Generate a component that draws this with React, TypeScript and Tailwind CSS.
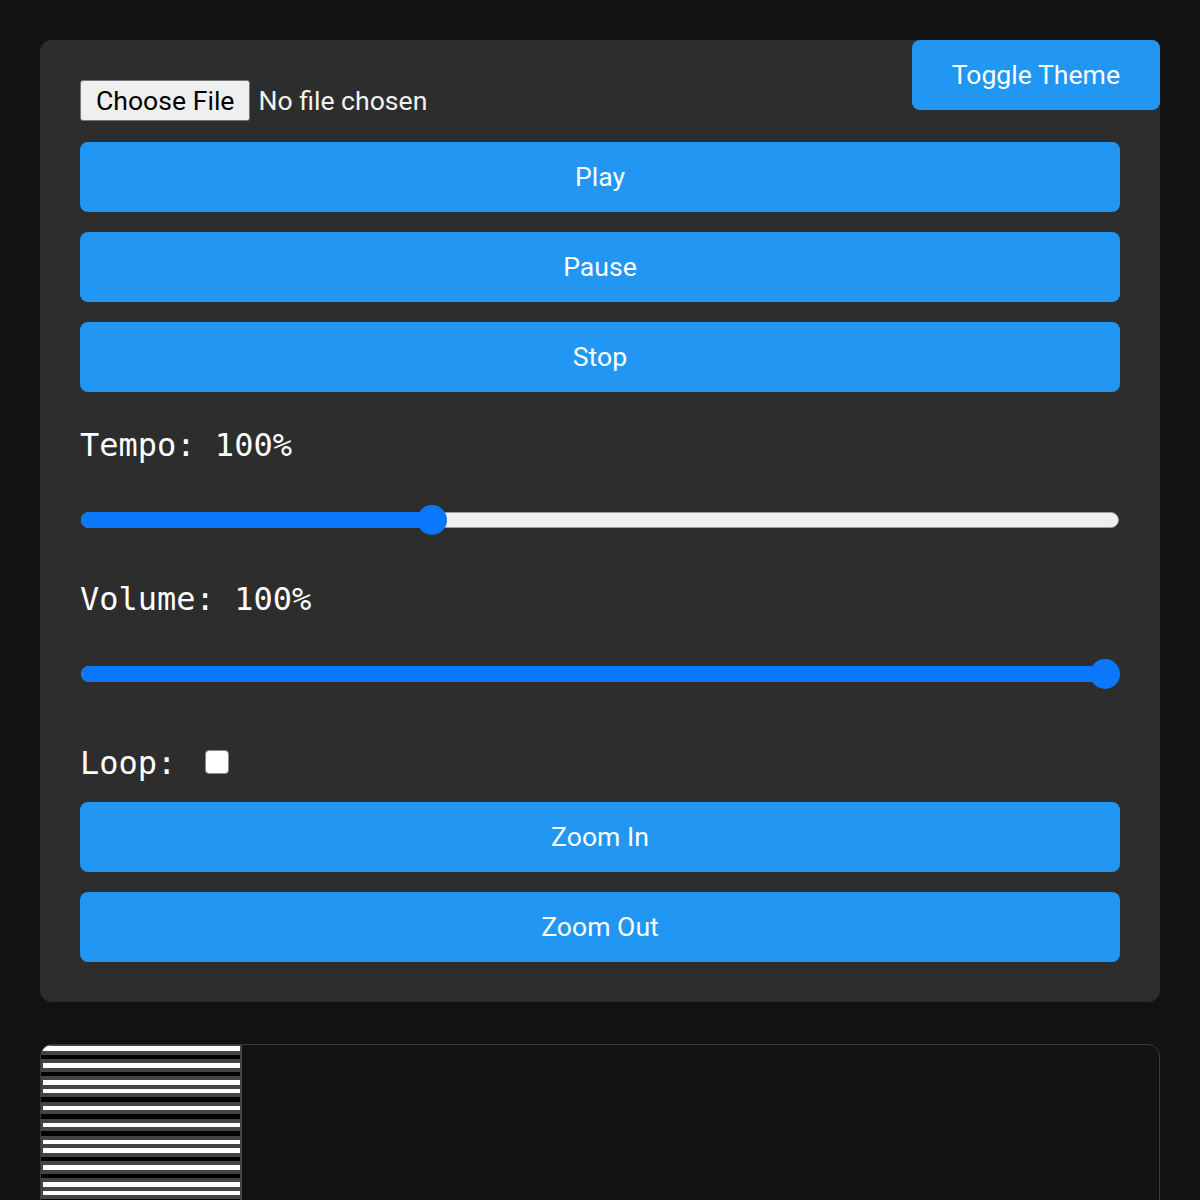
import { useState } from 'react';

const BLACK = [1, 3, 6, 8, 10];

// piano roll keys, top note first (starts on an E)
const keys = Array.from({ length: 72 }, (_, i) => {
  const note = (76 - i + 120) % 12;
  return BLACK.includes(note);
});

function Slider({ pct }: { pct: number }) {
  return (
    <div className="relative h-[30px] w-full">
      <div className="absolute inset-x-[1px] top-[7px] h-[16px] rounded-full border border-[#9c9c9c] bg-[#efefef]" />
      <div
        className="absolute left-[1px] top-[7px] h-[16px] rounded-full bg-[#0b78fb]"
        style={{ width: `calc(${pct} * (100% - 30px) + 15px)` }}
      />
      <div
        className="absolute top-0 h-[30px] w-[30px] rounded-full bg-[#0b78fb]"
        style={{ left: `calc(${pct} * (100% - 30px))` }}
      />
    </div>
  );
}

function Btn({ label }: { label: string }) {
  return (
    <button className="h-[70px] w-full rounded-[8px] bg-[#2196f3] text-[26.6px] text-white">
      {label}
    </button>
  );
}

export default function App() {
  const [loop, setLoop] = useState(false);

  return (
    <div className="min-h-screen bg-[#121212] p-[40px] font-['Roboto',sans-serif]">
      {/* Controls */}
      <div className="relative rounded-[12px] bg-[#2d2d2d] p-[40px]">
        <button className="absolute right-0 top-0 h-[70px] rounded-[8px] bg-[#2196f3] px-[40px] text-[26.6px] text-white">
          Toggle Theme
        </button>

        <input
          type="file"
          className="block h-[41px] text-[26.6px] text-[#f2f2f2] file:mr-[8px] file:h-[41px] file:rounded-[3px] file:border file:border-[#767676] file:bg-[#efefef] file:px-[15px] file:text-[26.6px] file:text-black"
        />

        <div className="mt-[21px] flex flex-col gap-[20px]">
          <Btn label="Play" />
          <Btn label="Pause" />
          <Btn label="Stop" />
        </div>

        <div className="mt-[35px] font-['DejaVu_Sans_Mono',monospace] text-[32px] leading-[37px] text-white">
          Tempo: 100%
        </div>
        <div className="mt-[41px]">
          <Slider pct={1 / 3} />
        </div>

        <div className="mt-[46px] font-['DejaVu_Sans_Mono',monospace] text-[32px] leading-[37px] text-white">
          Volume: 100%
        </div>
        <div className="mt-[41px]">
          <Slider pct={1} />
        </div>

        <label className="mt-[56px] flex items-center font-['DejaVu_Sans_Mono',monospace] text-[32px] leading-[37px] text-white">
          Loop:
          <input
            type="checkbox"
            checked={loop}
            onChange={(e) => setLoop(e.target.checked)}
            className="-mt-[4px] ml-[29px] h-[24px] w-[24px] appearance-none rounded-[4px] border border-[#8a8a8a] bg-white"
          />
        </label>

        <div className="mt-[20px] flex flex-col gap-[20px]">
          <Btn label="Zoom In" />
          <Btn label="Zoom Out" />
        </div>
      </div>

      {/* Piano roll */}
      <div className="mt-[42px] flex h-[600px] overflow-hidden rounded-[12px] border border-[#3a3a3a] bg-[#121212]">
        <div className="w-[201px] shrink-0 border-r-2 border-[#444]">
          <div className="-mt-[1px]">
            {keys.map((black, i) => (
              <div
                key={i}
                className={
                  black
                    ? 'h-[8.5px] border-y-2 border-[#444] bg-black'
                    : 'h-[8.5px] border-y-2 border-l-2 border-[#444] bg-white'
                }
              />
            ))}
          </div>
        </div>
        <div className="flex-1" />
      </div>
    </div>
  );
}
